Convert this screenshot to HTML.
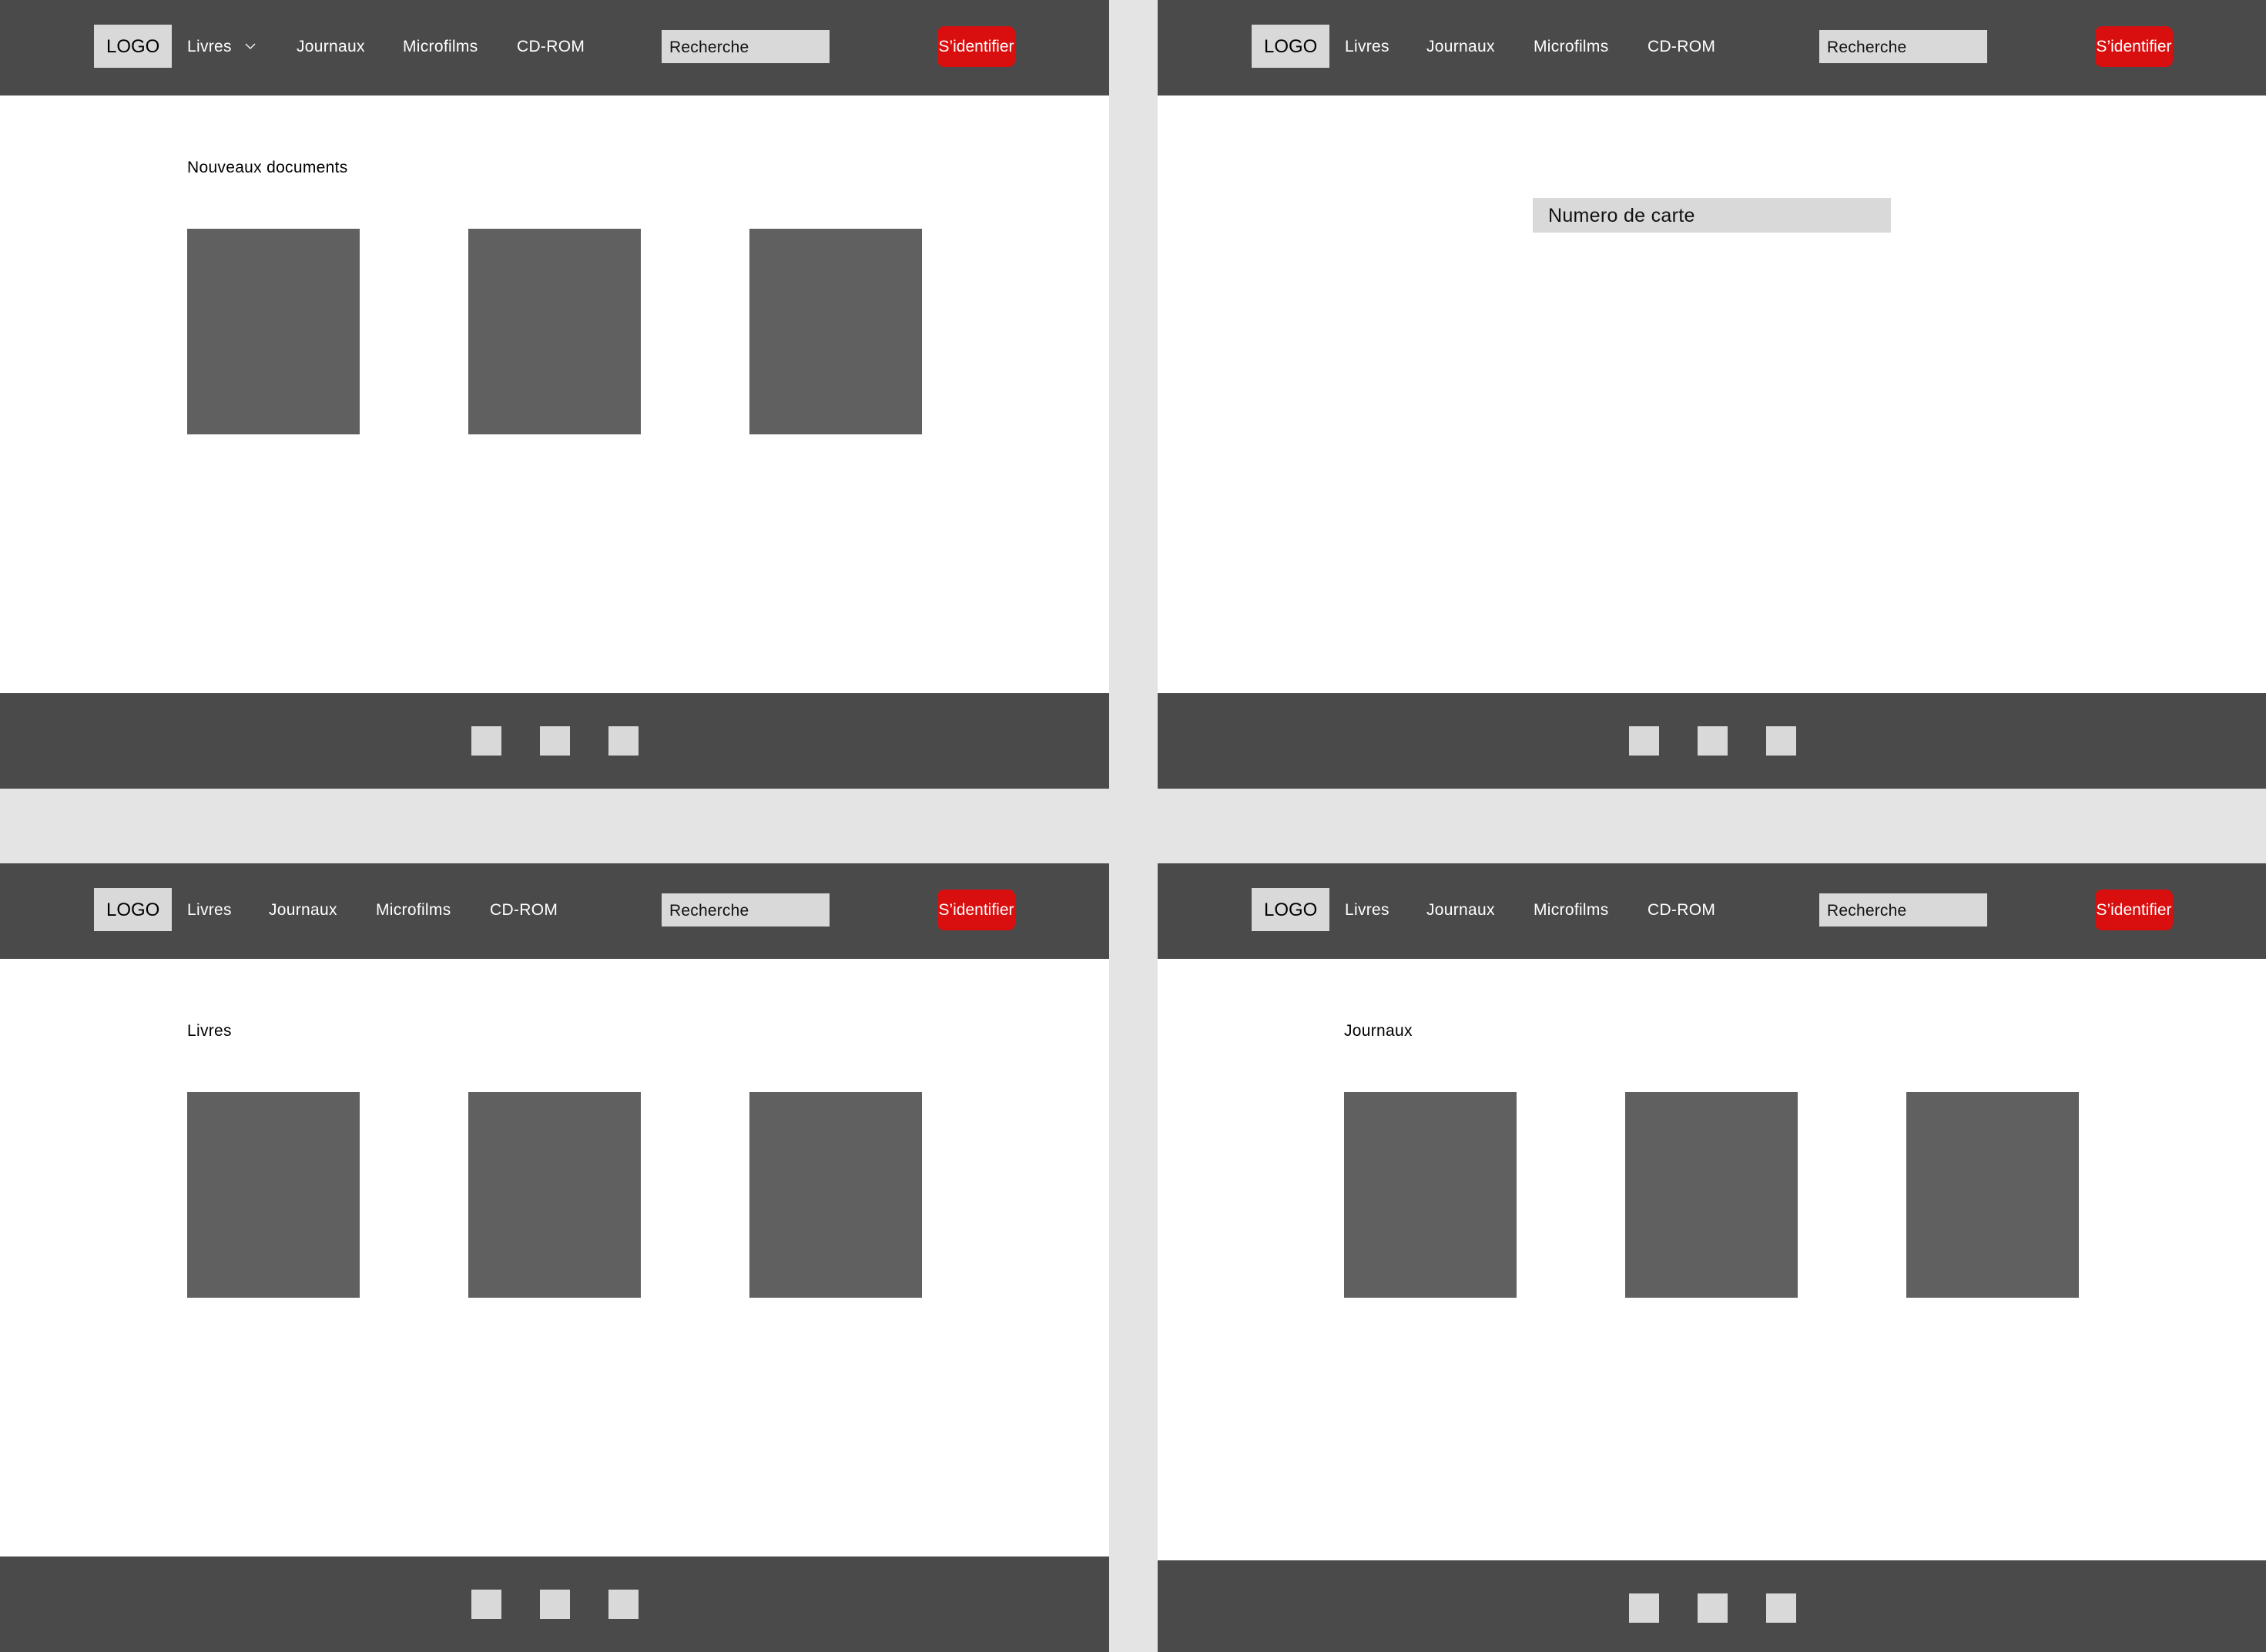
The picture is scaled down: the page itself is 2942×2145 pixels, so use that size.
<!DOCTYPE html>
<html><head><meta charset="utf-8"><style>
*{margin:0;padding:0;box-sizing:border-box}
body{width:2942px;height:2145px;background:#e4e4e4;position:relative;overflow:hidden;font-family:"Liberation Sans",Arial,sans-serif}
.f{position:absolute;background:#fff;overflow:hidden}
.a{position:absolute}
.hd{position:absolute;left:0;top:0;width:100%;height:124px;background:#4a4a4a}
.ft{position:absolute;left:0;width:100%;background:#4a4a4a}
.t{position:absolute;line-height:1;white-space:nowrap;font-size:21px;letter-spacing:0.3px}
.w{color:#fff}
.logo{position:absolute;left:122px;top:32px;width:101px;height:56px;background:#d9d9d9}
.logo span{position:absolute;left:16px;top:17px;font-size:24px;line-height:1;color:#000}
.sr{position:absolute;left:859px;top:39px;width:218px;height:43px;background:#d9d9d9}
.sr span{position:absolute;left:10px;top:12px;font-size:21px;line-height:1;color:#111;letter-spacing:0.2px}
.bt{position:absolute;left:1217px;top:34px;width:101px;height:53px;background:#d90f0f;border-radius:9px}
.bt span{position:absolute;left:-4px;top:16px;width:109px;text-align:center;font-size:21px;line-height:1;color:#fff;letter-spacing:0px}
.c{position:absolute;top:297px;width:224px;height:267px;background:#606060}
.sq{position:absolute;width:39px;height:38px;background:#d9d9d9}
</style></head><body>

<!-- TL -->
<div class="f" style="left:0;top:0;width:1440px;height:1024px">
 <div class="hd">
  <div class="logo"><span>LOGO</span></div>
  <div class="t w" style="left:243px;top:50px">Livres</div>
  <svg class="a" style="left:318px;top:56px" width="14" height="8" viewBox="0 0 14 8"><path d="M1 1 L7 7 L13 1" fill="none" stroke="#fff" stroke-width="1.3"/></svg>
  <div class="t w" style="left:385px;top:50px">Journaux</div>
  <div class="t w" style="left:523px;top:50px">Microfilms</div>
  <div class="t w" style="left:671px;top:50px">CD-ROM</div>
  <div class="sr"><span>Recherche</span></div>
  <div class="bt"><span>S’identifier</span></div>
 </div>
 <div class="t" style="left:243px;top:207px;color:#000">Nouveaux documents</div>
 <div class="c" style="left:243px"></div><div class="c" style="left:608px"></div><div class="c" style="left:973px"></div>
 <div class="ft" style="top:900px;height:124px">
  <div class="sq" style="left:612px;top:43px"></div><div class="sq" style="left:701px;top:43px"></div><div class="sq" style="left:790px;top:43px"></div>
 </div>
</div>

<!-- TR -->
<div class="f" style="left:1503px;top:0;width:1439px;height:1024px">
 <div class="hd">
  <div class="logo"><span>LOGO</span></div>
  <div class="t w" style="left:243px;top:50px">Livres</div>
  <div class="t w" style="left:349px;top:50px">Journaux</div>
  <div class="t w" style="left:488px;top:50px">Microfilms</div>
  <div class="t w" style="left:636px;top:50px">CD-ROM</div>
  <div class="sr"><span>Recherche</span></div>
  <div class="bt"><span>S’identifier</span></div>
 </div>
 <div class="a" style="left:487px;top:257px;width:465px;height:45px;background:#d9d9d9"><span class="t" style="left:20px;top:11px;font-size:25px;color:#111">Numero de carte</span></div>
 <div class="ft" style="top:900px;height:124px">
  <div class="sq" style="left:612px;top:43px"></div><div class="sq" style="left:701px;top:43px"></div><div class="sq" style="left:790px;top:43px"></div>
 </div>
</div>

<!-- BL -->
<div class="f" style="left:0;top:1121px;width:1440px;height:1024px">
 <div class="hd">
  <div class="logo"><span>LOGO</span></div>
  <div class="t w" style="left:243px;top:50px">Livres</div>
  <div class="t w" style="left:349px;top:50px">Journaux</div>
  <div class="t w" style="left:488px;top:50px">Microfilms</div>
  <div class="t w" style="left:636px;top:50px">CD-ROM</div>
  <div class="sr"><span>Recherche</span></div>
  <div class="bt"><span>S’identifier</span></div>
 </div>
 <div class="t" style="left:243px;top:207px;color:#000">Livres</div>
 <div class="c" style="left:243px"></div><div class="c" style="left:608px"></div><div class="c" style="left:973px"></div>
 <div class="ft" style="top:900px;height:124px">
  <div class="sq" style="left:612px;top:43px"></div><div class="sq" style="left:701px;top:43px"></div><div class="sq" style="left:790px;top:43px"></div>
 </div>
</div>

<!-- BR -->
<div class="f" style="left:1503px;top:1121px;width:1439px;height:1024px">
 <div class="hd">
  <div class="logo"><span>LOGO</span></div>
  <div class="t w" style="left:243px;top:50px">Livres</div>
  <div class="t w" style="left:349px;top:50px">Journaux</div>
  <div class="t w" style="left:488px;top:50px">Microfilms</div>
  <div class="t w" style="left:636px;top:50px">CD-ROM</div>
  <div class="sr"><span>Recherche</span></div>
  <div class="bt"><span>S’identifier</span></div>
 </div>
 <div class="t" style="left:242px;top:207px;color:#000">Journaux</div>
 <div class="c" style="left:242px"></div><div class="c" style="left:607px"></div><div class="c" style="left:972px"></div>
 <div class="ft" style="top:905px;height:124px">
  <div class="sq" style="left:612px;top:43px"></div><div class="sq" style="left:701px;top:43px"></div><div class="sq" style="left:790px;top:43px"></div>
 </div>
</div>

</body></html>
